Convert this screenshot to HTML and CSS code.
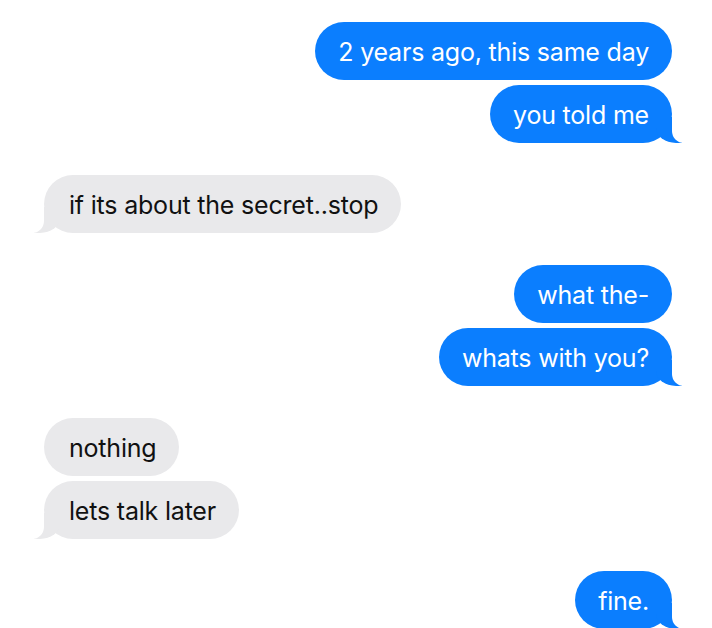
FILE: index.html
```html
<!DOCTYPE html>
<html>
	<head>
		<meta charset="UTF-8">
		<title>Messages</title>
		<link rel="stylesheet" href="styles.css">
	</head>
	<body>
		<div class="chat">
			<div class="group">
				<div class="msg sent">2 years ago, this same day</div>
				<div class="msg sent tail">you told me</div>
			</div>
			<div class="group">
				<div class="msg got tail">if its about the secret..stop</div>
			</div>
			<div class="group">
				<div class="msg sent">what the-</div>
				<div class="msg sent tail">whats with you?</div>
			</div>
			<div class="group">
				<div class="msg got">nothing</div>
				<div class="msg got tail">lets talk later</div>
			</div>
			<div class="group">
				<div class="msg sent tail">fine.</div>
			</div>
		</div>
	</body>
</html>
```

FILE: styles.css
```css
*{
	margin: 0;
	padding: 0;
	box-sizing: border-box;
}
body{
	background: #fff;
	font-family: Inter, "Liberation Sans", Arial, sans-serif;
}
.chat{
	width: 712px;
	padding: 22px 40px 0 44px;
	display: flex;
	flex-direction: column;
	gap: 32px;
}
.group{
	display: flex;
	flex-direction: column;
	gap: 5px;
}
.msg{
	position: relative;
	height: 58px;
	line-height: 32px;
	padding: 14px 23px 12px;
	border-radius: 29px;
	font-size: 25px;
	letter-spacing: -0.2px;
	max-width: 560px;
}
.sent{
	align-self: flex-end;
	background: #0b7efe;
	color: #fff;
}
.got{
	align-self: flex-start;
	background: #e9e9eb;
	color: #111;
	padding-left: 25px;
}
/* bubble tails */
.tail::before,
.tail::after{
	content: "";
	position: absolute;
	bottom: 0;
	height: 26px;
}
.sent.tail::before{
	right: -10px;
	width: 26px;
	background: #0b7efe;
	border-bottom-left-radius: 20px 15px;
}
.sent.tail::after{
	right: -28px;
	width: 28px;
	background: #fff;
	border-bottom-left-radius: 12px;
}
.got.tail::before{
	left: -10px;
	width: 26px;
	background: #e9e9eb;
	border-bottom-right-radius: 20px 15px;
}
.got.tail::after{
	left: -28px;
	width: 28px;
	background: #fff;
	border-bottom-right-radius: 12px;
}
```
